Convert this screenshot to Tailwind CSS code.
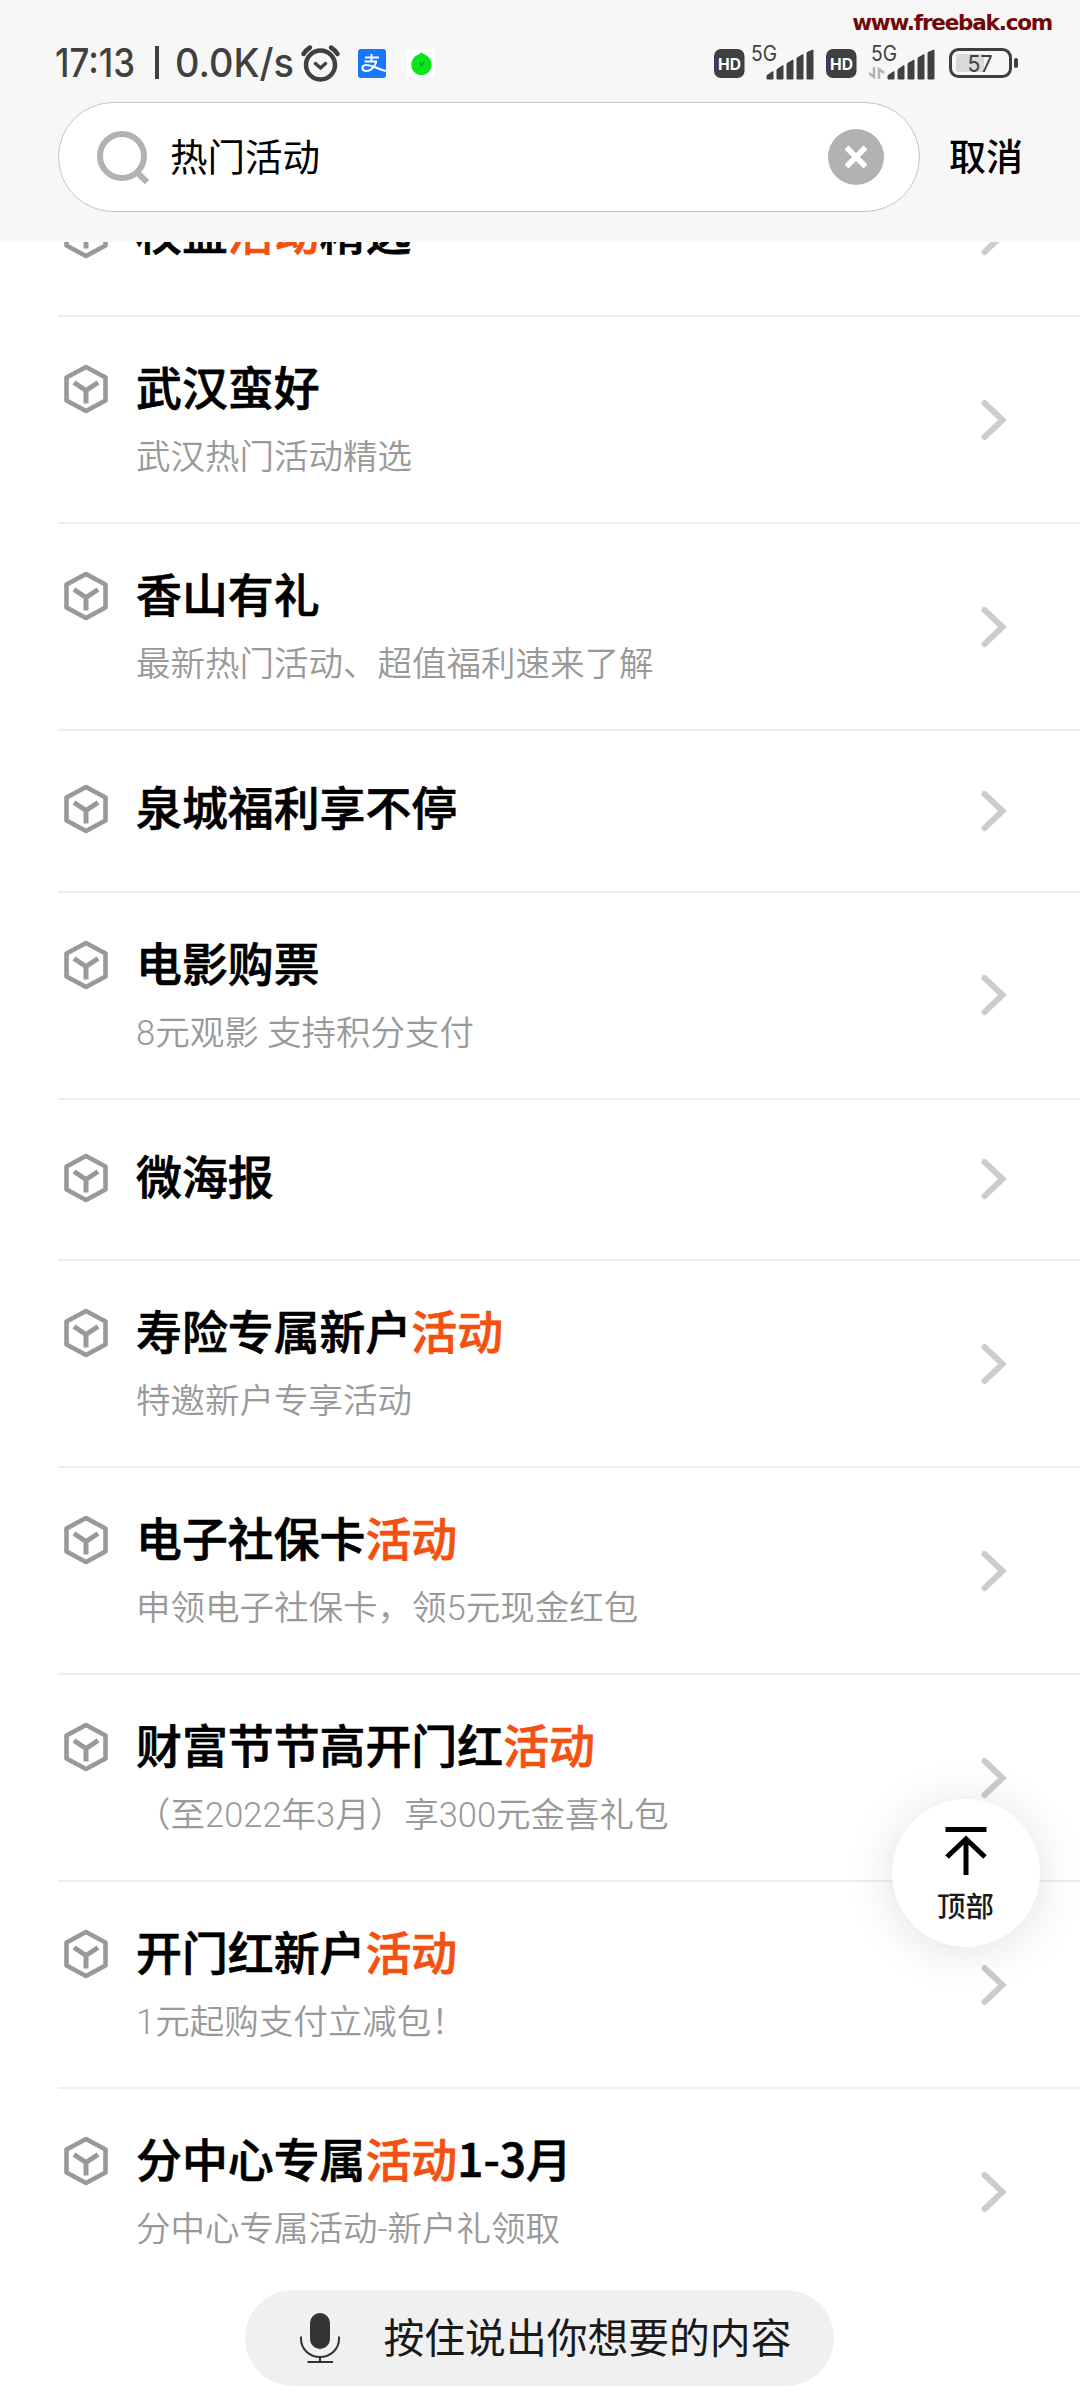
<!DOCTYPE html>
<html lang="zh-CN">
<head>
    <meta charset="UTF-8">
    <meta name="viewport" content="width=device-width, initial-scale=1.0">
    <script src="https://cdn.jsdelivr.net/npm/@tailwindcss/browser@4"></script>
    <title>热门活动</title>
</head>
<body class="bg-white">

    <svg class="hidden">
        <symbol id="cube" viewBox="0 0 44 50">
            <path d="M22 3 41.500 13.500V36.500L22 47 2.500 36.500V13.500Z" fill="none" stroke="#999" stroke-width="4.600" stroke-linejoin="round"/>
            <path d="M10 18.500 22 26.500 34 18.500M22 26.500V39.500" fill="none" stroke="#999" stroke-width="5"/>
        </symbol>
        <symbol id="chevron" viewBox="0 0 26 42">
            <path d="M3.500 4 21.500 21 3.500 38" fill="none" stroke="#ccc" stroke-width="6" stroke-linecap="round"/>
        </symbol>
        <symbol id="signal" viewBox="0 0 48 31">
            <path d="M1 26.500 7 22.500V30H1ZM11 20.500 17 16.500V30H11ZM21 14.500 27 11V30H21ZM31 9 37 5.500V30H31ZM41 3.500 47 1V30H41Z" fill="#404040" stroke="#404040" stroke-linejoin="round"/>
        </symbol>
    </svg>

    <div class="relative w-[1080px] h-[2400px] overflow-hidden bg-white font-['Noto_Sans_CJK_SC',sans-serif] flex flex-col">

        <header class="relative z-10 h-[242px] shrink-0 bg-[#f7f7f7]">
            <span class="absolute top-[7px] right-[28px] text-[21.500px] leading-[32px] tracking-[-1.2px] font-bold whitespace-nowrap text-[#730606] font-['DejaVu_Sans',sans-serif]">www.freebak.com</span>

            <!-- status bar -->
            <div class="h-[102px] pt-[24px] pl-[54px] pr-[61px] flex items-center text-[#404040] font-['Inter',sans-serif]">
                <svg class="w-[244px] h-[50px] font-medium" fill="#404040">
                    <text x="1" y="39" font-size="39" textLength="80" lengthAdjust="spacingAndGlyphs">17:13</text>
                    <rect x="101" y="8" width="4" height="33"/>
                    <text x="121" y="39" font-size="39" textLength="119" lengthAdjust="spacingAndGlyphs">0.0K/s</text>
                </svg>
                <svg class="ml-[2px] w-[42px] h-[40px]" viewBox="0 0 42 40" fill="none" stroke="#404040" stroke-width="4.500" stroke-linecap="round">
                    <circle cx="20.500" cy="22" r="14.500"/>
                    <path d="M3.500 11Q6 7 10 4.500M31 4.500Q35 7 37.500 11"/>
                    <path d="M15.500 20.500 20.500 25 25.500 20.500" stroke-width="3.500"/>
                </svg>
                <svg class="ml-[16px] w-[28px] h-[29px]" viewBox="0 0 28 29" fill="none" stroke="#fff">
                    <rect width="28" height="29" rx="3" fill="#1677ff" stroke="none"/>
                    <path d="M13.500 5V13M7 8.500H21M6.500 12.500H19" stroke-width="1.800"/>
                    <path d="M18.500 12.500C16 20 11 22.500 7.500 22 3 21 3.500 16.500 8 16 13 15.500 19 20 28 22" stroke-width="2"/>
                </svg>
                <div class="ml-[21px] size-[28px] bg-white flex items-center justify-center">
                    <svg class="w-[23px] h-[25px]" viewBox="0 0 24 26"><path d="M12 1C14 4 18 4 20 7C26 15 21 25 12 25S-2 15 4 7C6 4 10 4 12 1Z" fill="#0be51c"/><path d="M10 12 12 15 15 11" fill="none" stroke="#07a814" stroke-width="1.500"/></svg>
                </div>

                <svg class="ml-auto w-[31px] h-[29px]"><rect width="30.500" height="29" rx="7" fill="#404040"/><text x="4" y="20.500" font-size="16" font-weight="700" textLength="23" lengthAdjust="spacingAndGlyphs" fill="#fff">HD</text></svg>
                <div class="relative ml-[6px] w-[64px] h-[36px]">
                    <svg class="absolute left-0 -top-[9px] w-[36px] h-[36px]"><text x="0" y="24.500" font-size="21" textLength="26" lengthAdjust="spacingAndGlyphs" fill="#404040">5G</text></svg>
                    <svg class="absolute left-[15px] top-[4px] w-[48px] h-[31px]"><use href="#signal"/></svg>
                </div>
                <svg class="ml-[11px] w-[31px] h-[29px]"><rect width="30.500" height="29" rx="7" fill="#404040"/><text x="4" y="20.500" font-size="16" font-weight="700" textLength="23" lengthAdjust="spacingAndGlyphs" fill="#fff">HD</text></svg>
                <div class="relative ml-[11px] w-[68px] h-[36px]">
                    <svg class="absolute left-[3px] -top-[9px] w-[36px] h-[36px]"><text x="0" y="24.500" font-size="21" textLength="26" lengthAdjust="spacingAndGlyphs" fill="#404040">5G</text></svg>
                    <svg class="absolute left-0 top-[22px] w-[17px] h-[12px]" viewBox="0 0 17 12" fill="none" stroke="#b4b4b4" stroke-width="2.500"><path d="M6 0V10L1 6M11 12V2L16 6"/></svg>
                    <svg class="absolute left-[19px] top-[4px] w-[48px] h-[31px]"><use href="#signal"/></svg>
                </div>
                <svg class="ml-[13px] w-[70px] h-[30px]" viewBox="0 0 70 30">
                    <rect x="7" y="6" width="28" height="18" rx="2" fill="#d9d9d9"/>
                    <rect x="1.500" y="1.500" width="60" height="27" rx="8" fill="none" stroke="#404040" stroke-width="3"/>
                    <rect x="65" y="10" width="4" height="10" rx="2" fill="#404040"/>
                    <text x="18.500" y="23.500" font-size="23.500" textLength="25" lengthAdjust="spacingAndGlyphs" fill="#404040">57</text>
                </svg>
            </div>

            <!-- search -->
            <div class="pl-[58px] flex items-center">
                <div class="w-[862px] h-[110px] rounded-full border border-[#c4c4c4] bg-white flex items-center pl-[38px] pr-[35px]">
                    <svg class="w-[52px] h-[54px]" viewBox="0 0 52 54" fill="none" stroke="#b2b2b2">
                        <circle cx="25" cy="26" r="22" stroke-width="6"/>
                        <path d="M39.500 42 50 52" stroke-width="6"/>
                    </svg>
                    <span class="ml-[21px] mb-[4px] text-[37.500px] leading-[54px] text-black">热门活动</span>
                    <svg class="ml-auto size-[56px]" viewBox="0 0 56 56"><circle cx="28" cy="28" r="28" fill="#b2b2b2"/><path d="M18.500 18.500 37.500 37.500M37.500 18.500 18.500 37.500" stroke="#fff" stroke-width="5.500"/></svg>
                </div>
                <span class="ml-[29px] mb-[4px] text-[37px] leading-[54px] font-medium text-black whitespace-nowrap">取消</span>
            </div>
        </header>

        <!-- results, scrolled partly under the header -->
        <main id="list" class="-mt-[86.500px] pl-[58px]"></main>

        <button type="button" class="absolute left-[891.500px] top-[1799px] size-[148px] rounded-full bg-white shadow-[0_4px_50px_rgba(0,0,0,0.12)] flex flex-col items-center">
            <svg class="mt-[28px] w-[42px] h-[50px]" viewBox="0 0 42 50" fill="none" stroke="#000" stroke-width="5">
                <path d="M0.500 2.500H41.500M21 48V12M2 30 21 12 40 30"/>
            </svg>
            <span class="mt-[10px] text-[28.500px] leading-[36px] text-[#1a1a1a] font-medium">顶部</span>
        </button>

        <footer class="absolute bottom-0 left-0 w-full h-[124px] bg-white flex justify-center pt-[14px]">
            <div class="w-[589px] h-[96px] mr-[2px] rounded-full bg-[#f0f0f0] flex items-center pl-[55px]">
                <svg class="w-[40px] h-[52px]" viewBox="0 0 40 52" fill="none" stroke="#333" stroke-width="2">
                    <rect x="10" y="1" width="20" height="36" rx="10" fill="#333" stroke="none"/>
                    <path d="M1 24.500V27A19 18 0 0 0 39 27V24.500M20 45V50M7.500 50H33"/>
                </svg>
                <span class="ml-[44px] mb-[5px] text-[40.800px] leading-[60px] text-[#1a1a1a] whitespace-nowrap">按住说出你想要的内容</span>
            </div>
        </footer>
    </div>

    <script>
        const keyword = '活动';
        const items = [
            { title: '权益活动精选' },
            { title: '武汉蛮好', desc: '武汉热门活动精选' },
            { title: '香山有礼', desc: '最新热门活动、超值福利速来了解' },
            { title: '泉城福利享不停' },
            { title: '电影购票', desc: '8元观影 支持积分支付' },
            { title: '微海报' },
            { title: '寿险专属新户活动', desc: '特邀新户专享活动' },
            { title: '电子社保卡活动', desc: '申领电子社保卡，领5元现金红包' },
            { title: '财富节节高开门红活动', desc: '（至2022年3月）享300元金喜礼包' },
            { title: '开门红新户活动', desc: '1元起购支付立减包！' },
            { title: '分中心专属活动1-3月', desc: '分中心专属活动-新户礼领取' }
        ];

        document.getElementById('list').innerHTML = items.map(item => {
            const title = item.title.replace(keyword, `<span class="text-[#f4500f]">${keyword}</span>`);
            const height = item.desc ? 'h-[207px] pt-[40px]' : 'h-[161.500px] pt-[46px]';
            const desc = item.desc ? `<p class="mt-[20px] text-[34.500px] leading-[48px] font-[350] text-[#999] font-['Roboto','Noto_Sans_CJK_SC',sans-serif]">${item.desc}</p>` : '';

            return `
                <div class="relative flex border-b-2 border-[#eee] pl-[6px] ${height}">
                    <svg class="mt-[7px] w-[44px] h-[50px] shrink-0"><use href="#cube"/></svg>
                    <div class="ml-[28px] whitespace-nowrap">
                        <h2 class="text-[45.900px] leading-[56px] font-medium [-webkit-text-stroke:0.7px] text-black">${title}</h2>
                        ${desc}
                    </div>
                    <svg class="absolute right-[73px] inset-y-0 my-auto w-[26px] h-[42px]"><use href="#chevron"/></svg>
                </div>
            `;
        }).join('');
    </script>

</body>
</html>
